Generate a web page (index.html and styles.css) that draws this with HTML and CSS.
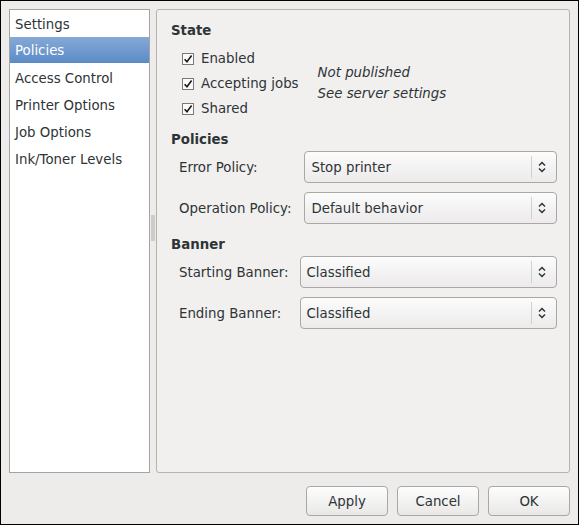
FILE: index.html
```html
<!DOCTYPE html>
<html>
<head>
<meta charset="utf-8">
<link rel="stylesheet" href="styles.css">
</head>
<body>
<div class="window">
  <div class="main">
    <ul class="sidebar">
      <li>Settings</li>
      <li class="selected">Policies</li>
      <li>Access Control</li>
      <li>Printer Options</li>
      <li>Job Options</li>
      <li>Ink/Toner Levels</li>
    </ul>
    <div class="handle"><div class="grip"></div></div>
    <div class="panel">
      <h3 class="heading">State</h3>
      <div class="state">
        <div class="checks">
          <label class="check"><svg class="box" viewBox="0 0 12 12"><rect x="0.5" y="0.5" width="11" height="11" fill="#fafafa" stroke="#7a7a7a"/><path d="M2.6 6.2 L5 8.8 L9.6 2.6" fill="none" stroke="#1a1a1a" stroke-width="1.6"/></svg>Enabled</label>
          <label class="check"><svg class="box" viewBox="0 0 12 12"><rect x="0.5" y="0.5" width="11" height="11" fill="#fafafa" stroke="#7a7a7a"/><path d="M2.6 6.2 L5 8.8 L9.6 2.6" fill="none" stroke="#1a1a1a" stroke-width="1.6"/></svg>Accepting jobs</label>
          <label class="check"><svg class="box" viewBox="0 0 12 12"><rect x="0.5" y="0.5" width="11" height="11" fill="#fafafa" stroke="#7a7a7a"/><path d="M2.6 6.2 L5 8.8 L9.6 2.6" fill="none" stroke="#1a1a1a" stroke-width="1.6"/></svg>Shared</label>
        </div>
        <div class="notes">
          <div>Not published</div>
          <div>See server settings</div>
        </div>
      </div>
      <h3 class="heading h-policies">Policies</h3>
      <div class="form form-policies">
        <span class="lbl">Error Policy:</span>
        <div class="combo"><span class="val">Stop printer</span><span class="sep"></span><svg class="arrows" viewBox="0 0 8 14"><path d="M1 5.5 L4 2.5 L7 5.5 M1 8.5 L4 11.5 L7 8.5" fill="none" stroke="#2e3436" stroke-width="1.5"/></svg></div>
        <span class="lbl">Operation Policy:</span>
        <div class="combo"><span class="val">Default behavior</span><span class="sep"></span><svg class="arrows" viewBox="0 0 8 14"><path d="M1 5.5 L4 2.5 L7 5.5 M1 8.5 L4 11.5 L7 8.5" fill="none" stroke="#2e3436" stroke-width="1.5"/></svg></div>
      </div>
      <h3 class="heading h-banner">Banner</h3>
      <div class="form form-banner">
        <span class="lbl">Starting Banner:</span>
        <div class="combo"><span class="val">Classified</span><span class="sep"></span><svg class="arrows" viewBox="0 0 8 14"><path d="M1 5.5 L4 2.5 L7 5.5 M1 8.5 L4 11.5 L7 8.5" fill="none" stroke="#2e3436" stroke-width="1.5"/></svg></div>
        <span class="lbl">Ending Banner:</span>
        <div class="combo"><span class="val">Classified</span><span class="sep"></span><svg class="arrows" viewBox="0 0 8 14"><path d="M1 5.5 L4 2.5 L7 5.5 M1 8.5 L4 11.5 L7 8.5" fill="none" stroke="#2e3436" stroke-width="1.5"/></svg></div>
      </div>
    </div>
  </div>
  <div class="buttons">
    <button class="btn">Apply</button>
    <button class="btn">Cancel</button>
    <button class="btn">OK</button>
  </div>
</div>
</body>
</html>
```

FILE: styles.css
```css
* { box-sizing: border-box; }
html, body { margin: 0; padding: 0; }
body {
  font-family: "DejaVu Sans", sans-serif;
  font-size: 13.33px;
  color: #2e3436;
  background: #edeceb;
}
.window {
  width: 579px;
  height: 525px;
  border: 1px solid #000;
  background: #edeceb;
  padding: 8px 8px 8px 8px;
  display: flex;
  flex-direction: column;
}
.main {
  display: flex;
  height: 464px;
}
.sidebar {
  list-style: none;
  margin: 0;
  padding: 0;
  width: 141px;
  background: #fff;
  border: 1px solid #a4a4a4;
}
.sidebar li {
  height: 27px;
  line-height: 25px;
  padding-top: 2px;
  padding-left: 5px;
  color: #2e3436;
  white-space: nowrap;
}
.sidebar li.selected {
  height: 26px;
  margin-bottom: 1px;
  line-height: 24px;
  color: #fff;
  background: linear-gradient(#86a9d7, #5b8bc7);
}
.handle {
  width: 6px;
  display: flex;
  align-items: center;
  justify-content: center;
}
.grip {
  width: 4px;
  height: 26px;
  margin-top: -26px;
  background-image: radial-gradient(circle, #bdbbb8 0.6px, transparent 0.9px);
  background-size: 2px 2px;
}
.panel {
  flex: 1;
  background: #f1f0ef;
  border: 1px solid #b5b3b0;
  border-radius: 3px;
  padding: 12px 0 0 14px;
}
.heading {
  margin: 0;
  font-size: 13.33px;
  font-weight: bold;
  line-height: 17px;
  color: #2e3436;
}
.state {
  display: flex;
  align-items: center;
  margin-top: 7px;
  margin-left: 11px;
}
.checks {
  display: flex;
  flex-direction: column;
}
.check {
  height: 25px;
  display: flex;
  align-items: center;
  white-space: nowrap;
}
.box {
  width: 12px;
  height: 12px;
  margin-right: 7px;
  flex: none;
}
.notes {
  margin-left: 19px;
  font-style: italic;
  line-height: 21px;
  padding-bottom: 1px;
}
.h-policies { margin-top: 10px; }
.h-banner { margin-top: 12px; }
.form {
  display: grid;
  grid-template-columns: max-content 253px;
  justify-content: start;
  row-gap: 9px;
  align-items: center;
  margin-top: 3px;
  margin-left: 8px;
}
.form-policies { column-gap: 13px; }
.form-banner { grid-template-columns: max-content 257px; column-gap: 11px; }
.lbl { white-space: nowrap; }
.combo {
  height: 32px;
  border: 1px solid #aaa8a5;
  border-radius: 4px;
  background: linear-gradient(#fcfcfc, #eceaea);
  display: flex;
  align-items: center;
  padding-left: 6px;
  color: #2e3436;
}
.combo .val { flex: 1; }
.combo .sep {
  width: 1px;
  height: 22px;
  background: #d2d0cd;
  margin-right: 6px;
}
.arrows {
  width: 8px;
  height: 14px;
  margin-right: 10px;
}
.buttons {
  margin-top: 13px;
  display: flex;
  justify-content: flex-end;
  gap: 9px;
}
.btn {
  width: 82px;
  height: 30px;
  font-family: "DejaVu Sans", sans-serif;
  font-size: 13.33px;
  color: #2e3436;
  border: 1px solid #aaa8a5;
  border-radius: 4px;
  background: linear-gradient(#fdfdfd, #e9e8e7);
  padding: 0;
}
```
